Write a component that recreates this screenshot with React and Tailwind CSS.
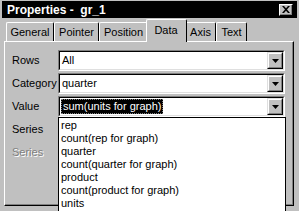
import React from "react";

const tabs = [
  { label: "General", w: "w-[48px]" },
  { label: "Pointer", w: "w-[45px]" },
  { label: "Position", w: "w-[49px]" },
  { label: "Data", w: "w-[37px]", active: true },
  { label: "Axis", w: "w-[31px]" },
  { label: "Text", w: "w-[31px]" },
];

const options = [
  "rep",
  "count(rep for graph)",
  "quarter",
  "count(quarter for graph)",
  "product",
  "count(product for graph)",
  "units",
];

function Tab({ label, w, active }) {
  if (active) {
    return (
      <div
        className={`relative z-10 -mx-[2px] -mb-[1px] flex h-[23px] w-[41px] items-start justify-center rounded-tl-[2px] rounded-tr-[2px] border-l border-t border-r border-l-white border-t-white border-r-black bg-[#c0c0c0] pt-[2px]`}
      >
        <div className="pr-[1px]">{label}</div>
      </div>
    );
  }
  return (
    <div
      className={`flex h-[19px] ${w} items-center justify-center rounded-tl-[2px] rounded-tr-[2px] border-l border-t border-r border-l-white border-t-white border-r-black`}
    >
      {label}
    </div>
  );
}

function DropButton() {
  return (
    <div className="h-[17px] w-[16px] border border-l-[#dfdfdf] border-t-[#dfdfdf] border-r-black border-b-black">
      <div className="flex h-full w-full items-center justify-center border border-l-white border-t-white border-r-[#808080] border-b-[#808080] bg-[#c0c0c0]">
        <svg width="7" height="4" viewBox="0 0 7 4">
          <path d="M0 0h7L3.5 4z" fill="#000" />
        </svg>
      </div>
    </div>
  );
}

function Combo({ value, focused }) {
  return (
    <div className="h-[21px] w-[227px] border border-l-[#808080] border-t-[#808080] border-r-white border-b-white">
      <div className="flex h-full w-full items-center border border-l-black border-t-black border-r-[#dfdfdf] border-b-[#dfdfdf] bg-white">
        <div className="flex min-w-0 flex-1 items-center pl-[1px]">
          {focused ? (
            <span className="border border-dotted border-[#808080] bg-black px-[1px] leading-[13px] text-white">
              {value}
            </span>
          ) : (
            <span className="pl-[1px]">{value}</span>
          )}
        </div>
        <DropButton />
      </div>
    </div>
  );
}

export default function App() {
  return (
    <div
      className="relative h-[211px] w-[299px] overflow-hidden bg-[#c0c0c0] text-[11px] text-black"
      style={{ fontFamily: '"Liberation Sans", Arial, sans-serif' }}
    >
      <div className="mx-[2px] mt-[1px] flex h-[17px] items-center justify-between bg-black pl-[5px] pr-[4px]">
        <span className="whitespace-pre text-[12px] font-bold text-white">
          {"Properties -  gr_1"}
        </span>
        <div className="h-[12px] w-[14px] border border-l-white border-t-white border-r-black border-b-black bg-[#c0c0c0]">
          <div className="flex h-full w-full items-center justify-center border-b border-r border-[#808080]">
            <svg width="8" height="7" viewBox="0 0 8 7">
              <path d="M0 0h2l2 2.2L6 0h2L5 3.5 8 7H6L4 4.8 2 7H0l3-3.5z" fill="#000" />
            </svg>
          </div>
        </div>
      </div>

      <div className="flex h-[23px] items-end pl-[6px]">
        {tabs.map((t) => (
          <Tab key={t.label} {...t} />
        ))}
      </div>

      <div className="ml-[4px] h-[165px] w-[290px] border border-l-white border-t-white border-r-black border-b-black">
        <div className="h-full w-full border-b border-r border-[#808080] pl-[7px] pt-[8px]">
          <div className="grid grid-cols-[46px_227px] gap-y-[2px]">
            <div className="flex h-[21px] items-center">Rows</div>
            <Combo value="All" />
            <div className="flex h-[21px] items-center">Category</div>
            <Combo value="quarter" />
            <div className="flex h-[21px] items-center">Value</div>
            <Combo value="sum(units for graph)" focused />
            <div className="flex h-[21px] items-center">Series</div>
            <div />
            <div className="flex h-[21px] items-center text-[#808080] [text-shadow:1px_1px_0_#fff]">
              Series
            </div>
            <div />
          </div>
        </div>
      </div>

      <div className="absolute left-[58px] top-[117px] h-[100px] w-[228px] border border-black bg-white pt-[1px]">
        {options.map((o) => (
          <div key={o} className="h-[13px] pl-[2px] leading-[13px]">
            {o}
          </div>
        ))}
      </div>
    </div>
  );
}
